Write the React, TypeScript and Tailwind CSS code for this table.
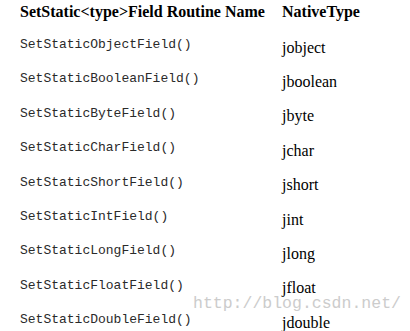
const rows: [string, string][] = [
  ["SetStaticObjectField()", "jobject"],
  ["SetStaticBooleanField()", "jboolean"],
  ["SetStaticByteField()", "jbyte"],
  ["SetStaticCharField()", "jchar"],
  ["SetStaticShortField()", "jshort"],
  ["SetStaticIntField()", "jint"],
  ["SetStaticLongField()", "jlong"],
  ["SetStaticFloatField()", "jfloat"],
  ["SetStaticDoubleField()", "jdouble"],
];

const serif = "font-['Liberation_Serif','Times_New_Roman',serif]";

export default function App() {
  return (
    <div className="relative h-[331px] w-[410px] overflow-hidden bg-white pl-[20px] text-black">
      <div className={`flex pt-[4px] text-[16px] leading-[16px] font-bold ${serif}`}>
        <div className="w-[262px]">SetStatic&lt;type&gt;Field Routine Name</div>
        <div>NativeType</div>
      </div>
      <div className="mt-[16px]">
        {rows.map(([fn, type]) => (
          <div key={fn} className="flex h-[34.4px]">
            <div className="w-[262px] pt-[2px] font-['Liberation_Mono','Courier_New',monospace] text-[13px] leading-[13px] text-[#2a2a2a]">
              {fn}
            </div>
            <div className={`pt-[3.6px] text-[16px] leading-[16px] ${serif}`}>{type}</div>
          </div>
        ))}
      </div>
      {/* watermark */}
      <div className="pointer-events-none absolute left-[193px] top-[295px] font-['Liberation_Mono',monospace] text-[16.5px] leading-[18px] text-[#cccccc]">
        http://blog.csdn.net/
      </div>
    </div>
  );
}
